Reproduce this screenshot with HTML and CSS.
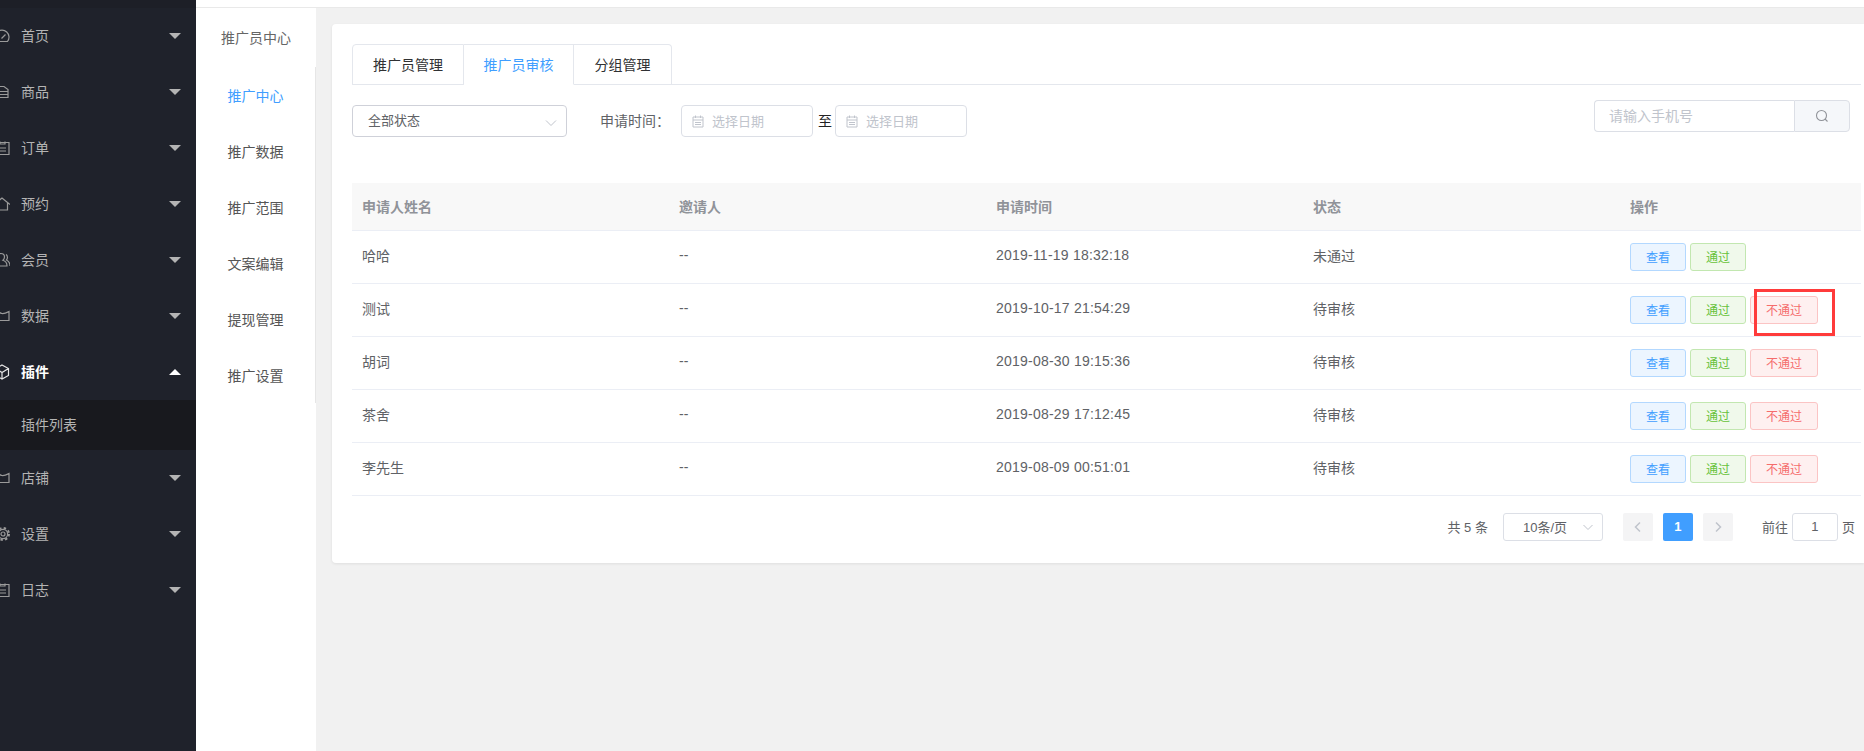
FILE: index.html
```html
<!DOCTYPE html>
<html lang="zh-CN">
<head>
<meta charset="utf-8">
<title>推广员审核</title>
<link rel="stylesheet" href="styles.css">
</head>
<body>
<div class="app">
  <aside class="sidebar">
    <div class="side-top"></div>
    <div class="side-item"><svg class="side-icon" viewBox="0 0 16 16"><path d="M2.5 13.5A7 7 0 1 1 13.5 13.5H2.5Z M7.5 10.5 11.5 6.5"/></svg><span class="side-label">首页</span><i class="arrow"></i></div>
    <div class="side-item"><svg class="side-icon" viewBox="0 0 16 16"><path d="M2 2.5H10L14 5.5V13.5H2Z M5 7.5H14 M5 10.5H14"/></svg><span class="side-label">商品</span><i class="arrow"></i></div>
    <div class="side-item"><svg class="side-icon" viewBox="0 0 16 16"><path d="M2 2.5H15V14.5H2Z M6 1.5V4H11V1.5 M5 8H12 M5 11H12"/></svg><span class="side-label">订单</span><i class="arrow"></i></div>
    <div class="side-item"><svg class="side-icon" viewBox="0 0 16 16"><path d="M0 8.5 8 2 16 8.5 M2.5 7V14H13.5V7"/></svg><span class="side-label">预约</span><i class="arrow"></i></div>
    <div class="side-item"><svg class="side-icon" viewBox="0 0 16 16"><path d="M7 1.5A3.5 3.5 0 0 1 10.5 5C10.500 6.500 9.700 7.600 8.900 8.200 11.500 9 13 11 13 14H1C1 11 2.500 9 5.100 8.200 4.300 7.600 3.500 6.500 3.500 5A3.500 3.500 0 0 1 7 1.500Z M12 2.500C13.500 3.300 14 6.500 12.500 8 14.500 9 16 11 16 14"/></svg><span class="side-label">会员</span><i class="arrow"></i></div>
    <div class="side-item"><svg class="side-icon" viewBox="0 0 16 16"><path d="M1 3.500C4 2.500 5 5 8 5.500 10.500 5.800 13 4.500 15 3.500V12.500H3"/></svg><span class="side-label">数据</span><i class="arrow"></i></div>
    <div class="side-item is-open"><svg class="side-icon" viewBox="0 0 16 16"><path d="M8 1 14.500 4.500V11.500L8 15 1.500 11.500V4.500Z M1.500 4.500 8 8.500 14.500 4.500 M8 8.500V15"/></svg><span class="side-label">插件</span><i class="arrow arrow-up"></i></div>
    <div class="side-sub"><span class="side-label">插件列表</span></div>
    <div class="side-item"><svg class="side-icon" viewBox="0 0 16 16"><path d="M1 3.500C4 2.500 5 5 8 5.500 10.500 5.800 13 4.500 15 3.500V12.500H3"/></svg><span class="side-label">店铺</span><i class="arrow"></i></div>
    <div class="side-item"><svg class="side-icon" viewBox="0 0 16 16"><circle cx="9" cy="8" r="4.600"/><circle cx="9" cy="8" r="2"/><circle class="gear-teeth" cx="9" cy="8" r="6"/></svg><span class="side-label">设置</span><i class="arrow"></i></div>
    <div class="side-item"><svg class="side-icon" viewBox="0 0 16 16"><path d="M2 2.500H15V14.500H2Z M6 1.500V4H11V1.500 M5 8H12 M5 11H12"/></svg><span class="side-label">日志</span><i class="arrow"></i></div>
  </aside>

  <div class="workspace">
    <div class="topbar"></div>
    <div class="below-top">
      <nav class="subnav">
        <div class="subnav-title">推广员中心</div>
        <ul class="subnav-list">
          <li class="subnav-item is-active">推广中心</li>
          <li class="subnav-item">推广数据</li>
          <li class="subnav-item">推广范围</li>
          <li class="subnav-item">文案编辑</li>
          <li class="subnav-item">提现管理</li>
          <li class="subnav-item">推广设置</li>
        </ul>
      </nav>

      <main class="content">
        <section class="card">
          <div class="tabs">
            <div class="tab tab-first">推广员管理</div>
            <div class="tab tab-mid is-active">推广员审核</div>
            <div class="tab tab-last">分组管理</div>
          </div>

          <div class="filters">
            <div class="filters-left">
              <div class="field select-status">
                <span class="select-text">全部状态</span>
                <svg class="chevron" viewBox="0 0 12 12"><path d="M1 3.500 6 8.500 11 3.500"/></svg>
              </div>
              <span class="filter-label">申请时间：</span>
              <div class="field date-field">
                <svg class="cal-icon" viewBox="0 0 14 14"><path d="M2 3H12V13H2Z M2 6H12 M4.500 1.500V4 M9.500 1.500V4 M4 8.500H10 M4 10.500H10"/></svg>
                <span class="placeholder">选择日期</span>
              </div>
              <span class="date-sep">至</span>
              <div class="field date-field">
                <svg class="cal-icon" viewBox="0 0 14 14"><path d="M2 3H12V13H2Z M2 6H12 M4.500 1.500V4 M9.500 1.500V4 M4 8.500H10 M4 10.500H10"/></svg>
                <span class="placeholder">选择日期</span>
              </div>
            </div>
            <div class="search">
              <div class="search-input"><span class="placeholder">请输入手机号</span></div>
              <div class="search-btn"><svg class="search-icon" viewBox="0 0 14 14"><circle cx="6.500" cy="6.500" r="5"/><path d="M10 10 12.500 12.500"/></svg></div>
            </div>
          </div>

          <div class="grid-wrap">
          <table class="grid">
            <thead>
              <tr><th>申请人姓名</th><th>邀请人</th><th>申请时间</th><th>状态</th><th>操作</th></tr>
            </thead>
            <tbody>
              <tr>
                <td class="cell-text">哈哈</td><td class="cell-text">--</td><td class="cell-text cell-date">2019-11-19 18:32:18</td><td class="cell-text">未通过</td>
                <td><div class="actions"><button class="btn btn-blue">查看</button><button class="btn btn-green">通过</button></div></td>
              </tr>
              <tr>
                <td class="cell-text">测试</td><td class="cell-text">--</td><td class="cell-text cell-date">2019-10-17 21:54:29</td><td class="cell-text">待审核</td>
                <td><div class="actions"><button class="btn btn-blue">查看</button><button class="btn btn-green">通过</button><span class="btn-wrap"><button class="btn btn-red">不通过</button><span class="red-box"></span></span></div></td>
              </tr>
              <tr>
                <td class="cell-text">胡词</td><td class="cell-text">--</td><td class="cell-text cell-date">2019-08-30 19:15:36</td><td class="cell-text">待审核</td>
                <td><div class="actions"><button class="btn btn-blue">查看</button><button class="btn btn-green">通过</button><button class="btn btn-red">不通过</button></div></td>
              </tr>
              <tr>
                <td class="cell-text">茶舍</td><td class="cell-text">--</td><td class="cell-text cell-date">2019-08-29 17:12:45</td><td class="cell-text">待审核</td>
                <td><div class="actions"><button class="btn btn-blue">查看</button><button class="btn btn-green">通过</button><button class="btn btn-red">不通过</button></div></td>
              </tr>
              <tr>
                <td class="cell-text">李先生</td><td class="cell-text">--</td><td class="cell-text cell-date">2019-08-09 00:51:01</td><td class="cell-text">待审核</td>
                <td><div class="actions"><button class="btn btn-blue">查看</button><button class="btn btn-green">通过</button><button class="btn btn-red">不通过</button></div></td>
              </tr>
            </tbody>
          </table>
          </div>

          <div class="pagination">
            <span class="total">共 5 条</span>
            <div class="page-size"><span>10条/页</span><svg class="chevron chevron-sm" viewBox="0 0 12 12"><path d="M1.500 4 6 8.500 10.500 4"/></svg></div>
            <div class="pager">
              <div class="page-btn"><svg class="pg-arrow" viewBox="0 0 10 12"><path d="M7 1.500 2.500 6 7 10.500"/></svg></div>
              <div class="page-btn is-current">1</div>
              <div class="page-btn"><svg class="pg-arrow" viewBox="0 0 10 12"><path d="M3 1.500 7.500 6 3 10.500"/></svg></div>
            </div>
            <div class="jump"><span>前往</span><div class="jump-input">1</div><span>页</span></div>
          </div>
        </section>
      </main>
    </div>
  </div>
</div>
</body>
</html>
```
FILE: styles.css
```css
* { box-sizing: border-box; }
html, body { margin: 0; padding: 0; height: 100%; overflow: hidden; }
body {
  font-family: "Liberation Sans", "Noto Sans CJK SC", sans-serif;
  font-size: 14px;
  color: #606266;
  background: #f1f1f1;
}
.app { display: flex; height: 751px; overflow: hidden; }

/* sidebar */
.sidebar { flex: 0 0 196px; background: #1f222b; overflow: hidden; }
.side-top { height: 8px; background: #1d1f27; }
.side-item { display: flex; align-items: center; height: 56px; padding-right: 15px; color: #b4b4b4; }
.side-item.is-open { color: #fff; font-weight: 700; }
.side-icon {
  flex: 0 0 16px; width: 16px; height: 16px; margin-left: -6px; margin-right: 11px;
  fill: none; stroke: #9a9a9a; stroke-width: 1.200;
}
.is-open .side-icon { stroke: #e8e8e8; }
.gear-teeth { stroke-width: 2; stroke-dasharray: 2.400 2.310; }
.side-label { line-height: 20px; }
.arrow {
  margin-left: auto; width: 0; height: 0;
  border-left: 6px solid transparent; border-right: 6px solid transparent;
  border-top: 6px solid #b4b4b4;
}
.arrow-up { border-top: 0; border-bottom: 6px solid #fff; }
.side-sub { display: flex; align-items: center; height: 50px; padding-left: 21px; background: #18191e; color: #b4b4b4; }

/* frame */
.workspace { flex: 1; min-width: 0; display: flex; flex-direction: column; }
.topbar { height: 8px; background: #fff; border-bottom: 1px solid #e9e9e9; }
.below-top { flex: 1; display: flex; min-height: 0; }

/* secondary nav */
.subnav { flex: 0 0 120px; background: #fff; }
.subnav-title { height: 59px; line-height: 60px; text-align: center; color: #666; }
.subnav-list { list-style: none; margin: 0; padding: 0; border-right: 1px solid #e6e6e6; }
.subnav-item { height: 56px; line-height: 58px; text-align: center; color: #555; }
.subnav-item.is-active { color: #409eff; }

/* content */
.content { flex: 1; min-width: 0; padding: 16px 0 0 16px; overflow: hidden; }
.card {
  height: 539px; background: #fff; border-radius: 4px 0 0 4px;
  padding: 20px 3px 0 20px; overflow: hidden;
  box-shadow: 0 1px 3px rgba(0, 0, 0, .08);
}

/* tabs */
.tabs { display: flex; height: 41px; border-bottom: 1px solid #e4e7ed; }
.tab {
  height: 41px; line-height: 40px; color: #303133; white-space: nowrap; text-align: center;
  border: 1px solid #e4e7ed; border-left: 0; background: #fff;
}
.tab-first { width: 112px; border-left: 1px solid #e4e7ed; border-top-left-radius: 4px; }
.tab-mid { width: 110px; }
.tab-last { width: 98px; border-top-right-radius: 4px; }
.tab.is-active { color: #409eff; border-bottom-color: #fff; }

/* filters */
.filters { display: flex; justify-content: space-between; align-items: flex-start; height: 98px; padding: 15px 11px 0 0; }
.filters-left { display: flex; align-items: center; padding-top: 5px; }
.field {
  display: flex; align-items: center; height: 32px; background: #fff;
  border: 1px solid #dcdfe6; border-radius: 4px;
}
.select-status { width: 215px; padding: 0 9px 0 15px; justify-content: space-between; border-color: #cfd1d9; }
.select-text { font-size: 13px; color: #606266; margin-top: -3px; }
.chevron { width: 12px; height: 12px; fill: none; stroke: #c0c4cc; stroke-width: 1; margin-top: 4px; }
.filter-label {
  margin: -3px 0 0 33px; width: 81px; color: #606266;
  font-family: "Liberation Sans", "Noto Sans CJK TC", sans-serif;
}
.date-field { width: 132px; padding-left: 9px; }
.cal-icon { width: 14px; height: 14px; margin-right: 7px; fill: none; stroke: #c0c4cc; stroke-width: 1; }
.placeholder { font-size: 13px; color: #c0c4cc; margin-top: -2px; }
.date-sep { margin: -2px 3px 0 5px; color: #222; }
.search { display: flex; height: 32px; }
.search-input {
  width: 200px; display: flex; align-items: center; padding-left: 14px;
  border: 1px solid #dcdfe6; border-right: 0; border-radius: 4px 0 0 4px;
}
.search-input .placeholder { font-size: 14px; }
.search-btn {
  width: 56px; display: flex; align-items: center; justify-content: center;
  background: #f5f7fa; border: 1px solid #dcdfe6; border-radius: 0 4px 4px 0;
}
.search-icon { width: 14px; height: 14px; fill: none; stroke: #909399; stroke-width: 1.100; }

/* table */
.grid-wrap { overflow: hidden; }
.grid { width: 1585px; border-collapse: collapse; table-layout: fixed; }
.grid th {
  height: 47px; padding: 0 10px 1px; text-align: left; font-weight: 700; color: #909399;
  background: #f8f8f8; border-bottom: 1px solid #ebeef5;
}
.grid td { height: 53px; padding: 0 10px; color: #606266; border-bottom: 1px solid #ebeef5; }
.grid td.cell-text { padding-bottom: 4px; }
.grid td.cell-date { letter-spacing: .22px; }
.actions { display: flex; gap: 4px; }
.btn {
  height: 28px; width: 56px; padding: 0; font-family: inherit; font-size: 12px;
  border: 1px solid; border-radius: 3px; cursor: pointer;
}
.btn-blue { color: #409eff; background: #ecf5ff; border-color: #b3d8ff; }
.btn-green { color: #67c23a; background: #f0f9eb; border-color: #c2e7b0; }
.btn-red { width: 68px; color: #f56c6c; background: #fef0f0; border-color: #fbc4c4; }
.btn-wrap { position: relative; display: block; height: 28px; }
.red-box {
  position: absolute; left: 4px; top: -7px; width: 81px; height: 47px;
  border: 3px solid #ff3b3b; pointer-events: none;
}

/* pagination */
.pagination {
  display: flex; justify-content: flex-end; align-items: center; height: 28px;
  margin-top: 17px; padding-right: 6px; font-size: 13px; color: #606266;
}
.total { margin-right: 15px; }
.page-size {
  display: flex; align-items: center; justify-content: space-between;
  width: 100px; height: 28px; padding: 0 8px 0 19px;
  border: 1px solid #dcdfe6; border-radius: 3px;
}
.chevron-sm { margin-top: 0; }
.pager { display: flex; gap: 10px; margin-left: 20px; }
.page-btn {
  display: flex; align-items: center; justify-content: center;
  width: 30px; height: 28px; background: #f4f4f5; border-radius: 2px; color: #606266;
}
.page-btn.is-current { background: #409eff; color: #fff; font-weight: 700; }
.pg-arrow { width: 10px; height: 12px; fill: none; stroke: #c0c4cc; stroke-width: 1.500; }
.jump { display: flex; align-items: center; gap: 4px; margin-left: 29px; }
.jump-input {
  width: 46px; height: 28px; line-height: 26px; text-align: center;
  border: 1px solid #dcdfe6; border-radius: 3px;
}
```
